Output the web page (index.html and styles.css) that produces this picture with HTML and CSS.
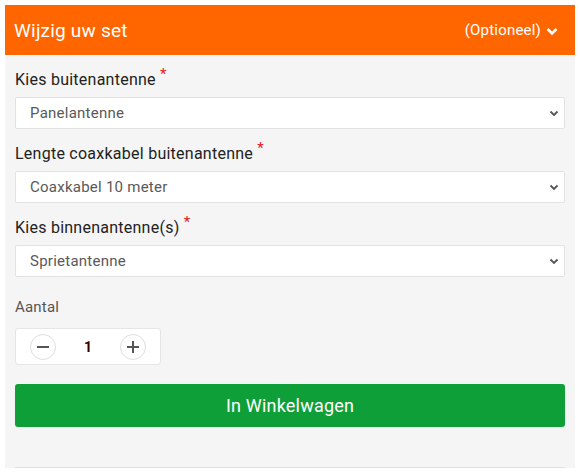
FILE: index.html
```html
<!DOCTYPE html>
<html>

<head>
    <meta charset="UTF-8">
    <title>Wijzig uw set</title>
    <!-- Styles -->
    <link rel="stylesheet" href="styles.css">
</head>

<body>
    <div class="set-panel">
        <!-- Header -->
        <div class="set-header">
            <span class="set-title">Wijzig uw set</span>
            <span class="set-optional">(Optioneel)
                <svg class="header-chevron" width="12" height="9" viewBox="0 0 12 9">
                    <path d="M1.5 2 L6 6.5 L10.5 2" fill="none" stroke="#fff" stroke-width="2.6" />
                </svg>
            </span>
        </div>

        <!-- Form -->
        <form class="set-form">
            <label class="field-label" for="outdoor">Kies buitenantenne <span class="req">*</span></label>
            <div class="select-wrap">
                <select id="outdoor" name="outdoor">
                    <option>Panelantenne</option>
                </select>
                <svg class="select-chevron" width="10" height="7" viewBox="0 0 10 7">
                    <path d="M1.5 1.5 L5 5 L8.5 1.5" fill="none" stroke="#555" stroke-width="1.8" />
                </svg>
            </div>

            <label class="field-label" for="cable">Lengte coaxkabel buitenantenne <span class="req">*</span></label>
            <div class="select-wrap">
                <select id="cable" name="cable">
                    <option>Coaxkabel 10 meter</option>
                </select>
                <svg class="select-chevron" width="10" height="7" viewBox="0 0 10 7">
                    <path d="M1.5 1.5 L5 5 L8.5 1.5" fill="none" stroke="#555" stroke-width="1.8" />
                </svg>
            </div>

            <label class="field-label" for="indoor">Kies binnenantenne(s) <span class="req">*</span></label>
            <div class="select-wrap">
                <select id="indoor" name="indoor">
                    <option>Sprietantenne</option>
                </select>
                <svg class="select-chevron" width="10" height="7" viewBox="0 0 10 7">
                    <path d="M1.5 1.5 L5 5 L8.5 1.5" fill="none" stroke="#555" stroke-width="1.8" />
                </svg>
            </div>

            <div class="qty-label">Aantal</div>
            <div class="qty-box">
                <button type="button" class="qty-btn">
                    <svg width="14" height="14" viewBox="0 0 14 14">
                        <path d="M1 7 H13" stroke="#555" stroke-width="2" />
                    </svg>
                </button>
                <span class="qty-value">1</span>
                <button type="button" class="qty-btn">
                    <svg width="14" height="14" viewBox="0 0 14 14">
                        <path d="M1 7 H13 M7 1 V13" stroke="#555" stroke-width="2" />
                    </svg>
                </button>
            </div>

            <button type="submit" class="cart-btn">In Winkelwagen</button>
        </form>

        <div class="divider"></div>
    </div>
</body>

</html>
```

FILE: styles.css
```css
body {
    margin: 0;
    padding: 5px;
    background-color: #fff;
    font-family: Roboto, "Liberation Sans", sans-serif;
}

.set-panel {
    width: 570px;
    background-color: #f5f5f5;
}

.set-header {
    display: flex;
    align-items: center;
    justify-content: space-between;
    height: 50px;
    padding: 0 17px 0 9px;
    background-color: #ff6600;
    color: #fff;
}

.set-title {
    font-size: 19px;
    letter-spacing: 0.2px;
}

.set-optional {
    display: flex;
    align-items: center;
    gap: 5px;
    font-size: 15px;
    letter-spacing: 0.2px;
}

.header-chevron {
    margin-top: 2px;
}

.set-form {
    display: flex;
    flex-direction: column;
    padding: 13px 10px 0 10px;
}

.field-label {
    height: 24px;
    line-height: 24px;
    margin-bottom: 5px;
    font-size: 16px;
    letter-spacing: 0.25px;
    color: #222;
}

.req {
    position: relative;
    top: -6px;
    font-size: 15px;
    color: #e02020;
}

.select-wrap {
    position: relative;
    margin-bottom: 13px;
}

select {
    width: 100%;
    height: 32px;
    padding: 0 14px;
    box-sizing: border-box;
    border: 1px solid #e2e2e2;
    border-radius: 2px;
    background-color: #fff;
    font-family: Roboto, "Liberation Sans", sans-serif;
    font-size: 15px;
    letter-spacing: 0.25px;
    color: #595959;
    appearance: none;
}

.select-chevron {
    position: absolute;
    right: 6px;
    top: 13px;
    pointer-events: none;
}

.qty-label {
    margin-top: 5px;
    line-height: 24px;
    font-size: 15px;
    letter-spacing: 0.2px;
    color: #555;
}

.qty-box {
    display: flex;
    align-items: center;
    justify-content: space-between;
    width: 146px;
    height: 37px;
    margin-top: 9px;
    padding: 0 14px;
    box-sizing: border-box;
    border: 1px solid #e5e5e5;
    border-radius: 3px;
    background-color: #fff;
}

.qty-btn {
    display: flex;
    align-items: center;
    justify-content: center;
    width: 26px;
    height: 26px;
    padding: 0;
    border: 1px solid #dedede;
    border-radius: 50%;
    background-color: #fff;
}

.qty-value {
    font-size: 14px;
    font-weight: bold;
    color: #300;
}

.cart-btn {
    height: 43px;
    margin-top: 19px;
    border: none;
    border-radius: 3px;
    background-color: #0f9f38;
    color: #fff;
    font-family: Roboto, "Liberation Sans", sans-serif;
    font-size: 18px;
    letter-spacing: 0.2px;
    cursor: pointer;
}

.divider {
    margin: 40px 10px 0 10px;
    border-top: 1px solid #e0e0e0;
}
```
